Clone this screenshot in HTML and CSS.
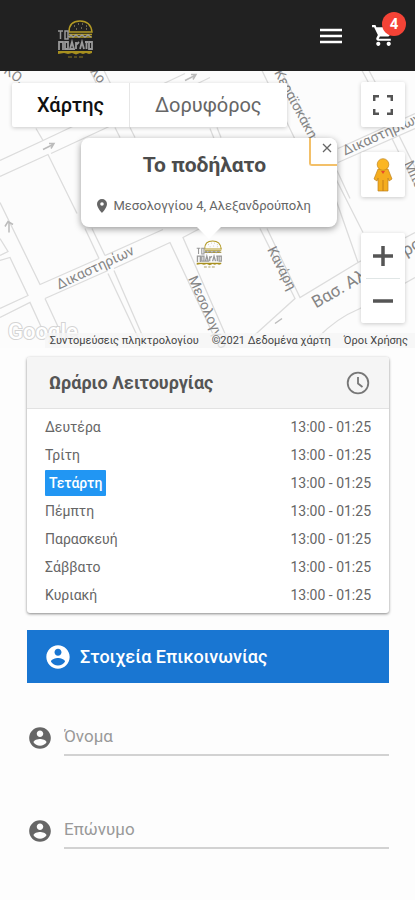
FILE: index.html
```html
<!DOCTYPE html>
<html lang="el">
<head>
<meta charset="utf-8">
<meta name="viewport" content="width=device-width, initial-scale=1">
<title>Το ποδήλατο</title>
<link rel="stylesheet" href="styles.css">
</head>
<body>
<svg width="0" height="0" class="defs" aria-hidden="true">
  <symbol id="account" viewBox="0 0 24 24"><path fill="currentColor" d="M12 2C6.480 2 2 6.480 2 12s4.480 10 10 10 10-4.480 10-10S17.520 2 12 2zm0 3c1.660 0 3 1.340 3 3s-1.340 3-3 3-3-1.340-3-3 1.340-3 3-3zm0 14.200c-2.500 0-4.710-1.280-6-3.220.03-1.990 4-3.080 6-3.080 1.990 0 5.970 1.090 6 3.080-1.290 1.940-3.500 3.220-6 3.220z"/></symbol>
  <symbol id="burger" viewBox="0 0 36 38">
    <path d="M12 12C12 4 17 1 23 1s11 3 12 11z" fill="none" stroke="#b39a24" stroke-width="1.500"/>
    <path d="M17 6h1M21 4h1M25 4h1M29 6h1M19 9h1M24 8h1M29 9h1" stroke="#b8ad83"/>
    <path d="M12 14.500h23M12 17h23" stroke="#b39a24" stroke-width="1.500"/>
    <path d="M1 11h5M3.500 11v8M8 11h3v8H8zM12 17l2-2 2 2 3-2 3 2 3-2 3 2 3-2 3 2" fill="none" stroke="#999" stroke-width="1.500"/>
    <path d="M2 30v-8h4v8M8 22h3v7H8zM13 29l2-7 2 7zM19 22v7M19 25l3-3M23 29l2-7 2 7M28 22h3M29.500 22v7M32 22h3v7h-3z" fill="none" stroke="#999" stroke-width="1.800"/>
    <path d="M1 31h34v2l-3 1-3-1-3 1-3-1-4 1.500-4-1.500-4 1-4-1-6 1z" fill="#a8901f"/>
    <path d="M11 37h4M17 37h3M22 37h4" stroke="#8b7922"/>
  </symbol>
</svg>

<header class="topbar">
  <a class="brand" href="#" aria-label="Το ποδήλατο"><svg width="36" height="38"><use href="#burger"/></svg></a>
  <div class="actions">
    <button class="icon-btn" aria-label="Μενού"><svg width="22" height="16" viewBox="0 0 22 16"><path d="M0 2h22M0 8h22M0 14h22" stroke="#fff" stroke-width="2.500"/></svg></button>
    <button class="icon-btn cart" aria-label="Καλάθι">
      <svg width="25" height="25" viewBox="0 0 24 24" fill="#fff"><path d="M7 18c-1.100 0-2 .9-2 2s.9 2 2 2 2-.9 2-2-.9-2-2-2zM1 2v2h2l3.600 7.590-1.350 2.450C4.520 15.370 5.480 17 7 17h12v-2H7.420l1.130-2h7.450c.75 0 1.410-.41 1.750-1.030L21.700 4H5.210l-.94-2zm16 16c-1.100 0-2 .9-2 2s.9 2 2 2 2-.9 2-2-.9-2-2-2z"/></svg>
      <span class="badge">4</span>
    </button>
  </div>
</header>

<section class="map" aria-label="Χάρτης">
  <svg class="streets" viewBox="0 0 415 278" preserveAspectRatio="xMidYMid slice">
    <g fill="none" stroke="#dcdcdc" stroke-width="1.300">
      <path d="M0 90L43 70 36 58M43 70L185 3M0 106L48 84 77 143M51 83L107 57 210 7"/>
      <path d="M90 0l7 14M104 0l7 14M115 57l5 10M130 57l5 10M210 58l4 10M217 57l4 10"/>
      <path d="M85 158L99 188M92 158L105 185M108 203L139 269M114 200L144 269"/>
      <path d="M0 132L40 214 99 188M105 185L163 159M0 168L8 181 0 185M0 190L10 187 28 225 0 238M0 247L30 232 46 267M45 228L63 267M45 228L108 200M114 198L170 172 216 270M200 158L183 167 228 270"/>
      <path d="M262 0l48 100M281 0L363 162M337 100L350 128M332 118L358 192 300 227 267 158M260 158L295 228 252 267M318 267Q336 248 360 238L415 207M358 192L415 162"/>
      <path d="M338 78L415 43M338 92L415 58M362 0L370 15M369 0L377 15M392 68L415 115M399 65L415 97"/>
    </g>
    <g fill="none" stroke="#bbb" stroke-width="1.500"><path d="M43 79l10-5m-4-1 5 0-3 5M185 10l10-5m-4-1 5 0-3 5M9 162V151m-4 5 3-5 5 3M275 253l7-5"/></g>
    <g class="names">
      <text transform="translate(59 219) rotate(-25)">Δικαστηρίων</text>
      <text transform="translate(345 85) rotate(-24)">Δικαστηρίων</text>
      <text transform="translate(274 2) rotate(62)">Κεραϊσκάκη</text>
      <text transform="translate(188 208) rotate(66)">Μεσολογγίου</text>
      <text transform="translate(267 179) rotate(63)">Κανάρη</text>
      <text transform="translate(404 93) rotate(65)">Μπο</text>
      <text transform="translate(3 2) rotate(35)">ΚΟ.</text>
      <text transform="translate(90 1) rotate(55)">λο</text>
      <text class="major" transform="translate(316 238) rotate(-30)">Βασ. Αλεξάνδρου</text>
    </g>
    <text class="google" x="8" y="268">Google</text>
  </svg>

  <div class="map-types"><button class="on">Χάρτης</button><button>Δορυφόρος</button></div>

  <div class="map-tools">
    <button class="tool" aria-label="Πλήρης οθόνη"><svg width="20" height="20" viewBox="0 0 20 20" fill="none" stroke="#555" stroke-width="2.500"><path d="M1.200 6V1.200H6M14 1.200h4.800V6M18.800 14v4.800H14M6 18.800H1.200V14"/></svg></button>
    <button class="tool person" aria-label="Street View"><svg width="20" height="34" viewBox="0 0 20 34"><path d="M5 11h10l4 10-3 2-1-3v13H5V20l-1 3-3-2z" fill="#f5ad1e" stroke="#bd8320" stroke-width=".7"/><circle cx="10" cy="6.500" r="5.800" fill="#fbb623" stroke="#bd8320" stroke-width=".7"/><path d="M8 13l2 3 2-3z" fill="#e84b2c"/><path d="M10 22v11" stroke="#c57f16"/></svg></button>
    <div class="zoom">
      <button aria-label="Μεγέθυνση"><svg width="20" height="20" viewBox="0 0 20 20"><path d="M10 0v20M0 10h20" stroke="#555" stroke-width="3.500"/></svg></button>
      <button aria-label="Σμίκρυνση"><svg width="20" height="20" viewBox="0 0 20 20"><path d="M0 10h20" stroke="#555" stroke-width="3.500"/></svg></button>
    </div>
  </div>

  <svg class="marker" width="26" height="28"><use href="#burger"/></svg>
  <div class="popup">
    <h1>Το ποδήλατο</h1>
    <p><svg width="10" height="14" viewBox="0 0 10 14"><path d="M5 0a5 5 0 0 0-5 5c0 3.700 5 9 5 9s5-5.300 5-9a5 5 0 0 0-5-5zm0 3.200a1.800 1.800 0 1 1 0 3.600 1.800 1.800 0 0 1 0-3.600z" fill="#666"/></svg>Μεσολογγίου 4, Αλεξανδρούπολη</p>
    <button class="close" aria-label="Κλείσιμο"><svg width="10" height="10" viewBox="0 0 10 10"><path d="M1 1l8 8M9 1L1 9" stroke="#666" stroke-width="1.300"/></svg></button>
  </div>

  <div class="legal"><a href="#">Συντομεύσεις πληκτρολογίου</a><span>©2021 Δεδομένα χάρτη</span><a href="#">Όροι Χρήσης</a></div>
</section>

<main>
  <section class="card">
    <div class="card-head"><h2>Ωράριο Λειτουργίας</h2><svg width="24" height="24" viewBox="0 0 24 24" fill="none" stroke="#777" stroke-width="1.800"><circle cx="12" cy="12" r="10.300"/><path d="M12 6v6.500l4.500 3.500"/></svg></div>
    <table>
      <tr><th scope="row">Δευτέρα</th><td>13:00 - 01:25</td></tr>
      <tr><th scope="row">Τρίτη</th><td>13:00 - 01:25</td></tr>
      <tr><th scope="row"><span class="today">Τετάρτη</span></th><td>13:00 - 01:25</td></tr>
      <tr><th scope="row">Πέμπτη</th><td>13:00 - 01:25</td></tr>
      <tr><th scope="row">Παρασκευή</th><td>13:00 - 01:25</td></tr>
      <tr><th scope="row">Σάββατο</th><td>13:00 - 01:25</td></tr>
      <tr><th scope="row">Κυριακή</th><td>13:00 - 01:25</td></tr>
    </table>
  </section>

  <form>
    <h2 class="banner"><svg width="28" height="28"><use href="#account"/></svg>Στοιχεία Επικοινωνίας</h2>
    <div class="field"><label for="first" aria-label="Όνομα"><svg width="26" height="26"><use href="#account"/></svg></label><input id="first" type="text" placeholder="Όνομα"></div>
    <div class="field"><label for="last" aria-label="Επώνυμο"><svg width="26" height="26"><use href="#account"/></svg></label><input id="last" type="text" placeholder="Επώνυμο"></div>
  </form>
</main>
</body>
</html>
```
FILE: styles.css
```css
* { box-sizing: border-box; }
body { margin: 0; background: #fdfdfd; color: #666; font-family: Roboto, "Liberation Sans", sans-serif; }
button { border: 0; padding: 0; background: #fff; font: inherit; color: inherit; display: flex; align-items: center; justify-content: center; }
svg { display: block; flex: none; }
h1, h2, p { margin: 0; }
.defs { position: absolute; }

.topbar { height: 71px; padding: 0 19px 0 57px; background: #212121; display: flex; align-items: center; justify-content: space-between; }
.brand { padding-top: 6px; }
.actions { display: flex; align-items: center; gap: 29px; }
.icon-btn { background: none; position: relative; }
.badge { position: absolute; left: 11px; top: -11px; width: 24px; height: 24px; border-radius: 50%; background: #f44336; color: #fff; font-size: 15px; line-height: 24px; font-weight: 700; }

.map { position: relative; height: 277px; overflow: hidden; background: #fcfcfc; }
.streets { width: 100%; height: 100%; }
.names { font-size: 14px; fill: #858585; }
.major { font-size: 17px; }
.google { font-size: 22px; font-weight: 500; fill: #fff; stroke: #d4d4d4; stroke-width: 2px; paint-order: stroke; }

.map-types { position: absolute; left: 12px; top: 12px; display: flex; height: 44px; border-radius: 2px; background: #fff; box-shadow: 0 1px 4px #0003; font-size: 20px; }
.map-types button { padding: 0 25px; background: none; }
.map-types .on { color: #111; border-right: 1px solid #e6e6e6; font-weight: 500; }

.map-tools { position: absolute; right: 10px; top: 11px; width: 44px; display: flex; flex-direction: column; }
.tool, .zoom { width: 44px; border-radius: 2px; background: #fff; box-shadow: 0 1px 4px #0003; }
.tool { height: 45px; }
.person { margin: 25px 0 36px; }
.zoom button { width: 34px; height: 45px; margin: 0 auto; background: none; }
.zoom button + button { border-top: 1px solid #e0e6e6; }

.marker { position: absolute; left: calc(50% - 12px); top: 169px; }
.popup { position: absolute; left: calc(50% - 127px); top: 67px; width: 256px; height: 89px; padding: 13px 0 0 16px; border-radius: 8px; background: #fff; box-shadow: 0 2px 7px #0006; }
.popup::after { content: ""; position: absolute; left: 115px; top: 88px; border: 13px solid transparent; border-top-color: #fff; border-bottom: 0; }
.popup h1 { padding-right: 24px; text-align: center; font-size: 21px; line-height: 28px; font-weight: 700; color: #4c4c4c; }
.popup p { display: flex; align-items: center; gap: 7px; padding-top: 17px; font-size: 13px; line-height: 20px; white-space: nowrap; }
.close { position: absolute; right: 0; top: 0; width: 28px; height: 28px; padding: 0 0 6px 6px; border: 2px solid #f3c069; border-top: 0; border-right: 0; border-radius: 0 8px 0 3px; }

.legal { position: absolute; right: 0; bottom: 0; padding: 0 7px 0 5px; height: 15px; display: flex; gap: 13px; background: #f5f5f5cc; font-size: 11px; line-height: 15px; color: #444; white-space: nowrap; }
.legal a { color: inherit; text-decoration: none; }

main { padding: 9px 26px 0 27px; }
.card { background: #fff; border-radius: 3px; box-shadow: 0 1px 3px #0007; }
.card-head { display: flex; align-items: center; justify-content: space-between; height: 52px; padding: 0 19px 0 22px; background: #f5f5f5; border-bottom: 1px solid #e2e2e2; border-radius: 3px 3px 0 0; }
.card-head h2 { font-size: 18px; font-weight: 700; color: #555; }
table { width: 100%; border-spacing: 0; padding: 4px 18px; font-size: 14px; }
th, td { height: 28px; padding: 0; font-weight: 400; text-align: left; line-height: 26px; }
td { text-align: right; }
.today { display: inline-block; padding: 0 4px; border-radius: 1px; background: #2196f3; color: #fff; font-weight: 500; }

.banner { display: flex; align-items: center; gap: 8px; height: 53px; margin: 17px 0 36px; padding: 0 17px; background: #1976d2; color: #fff; font-size: 18px; font-weight: 500; }
.field { display: flex; align-items: center; gap: 11px; height: 37px; margin-bottom: 56px; }
.field input { flex: 1; min-width: 0; height: 37px; padding: 0 0 2px; border: 0; border-bottom: 2px solid #d2d2d2; background: none; font: 17px Roboto, "Liberation Sans", sans-serif; color: #555; }
.field input::placeholder { color: #999; opacity: 1; }
```
